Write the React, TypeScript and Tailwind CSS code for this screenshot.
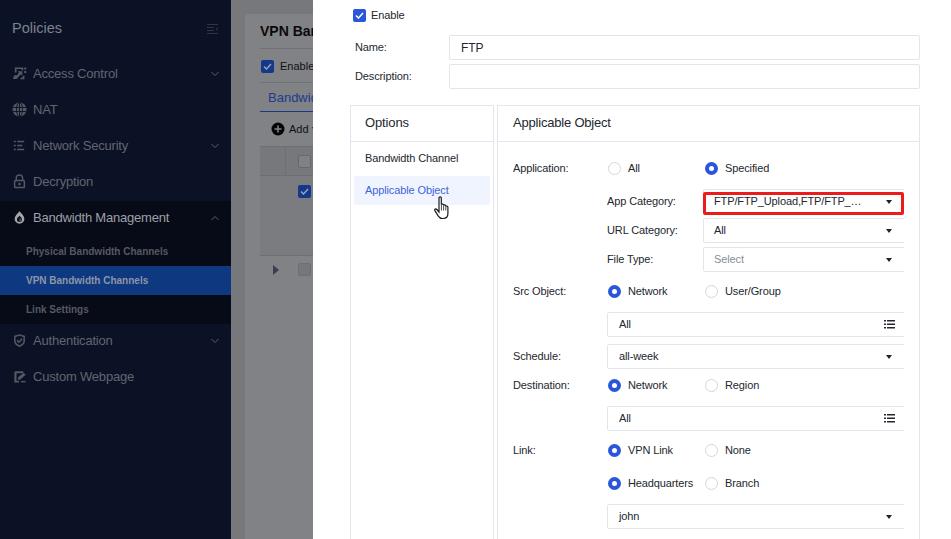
import React from "react";

const Chevron = ({ up = false }: { up?: boolean }) => (
  <svg width="10" height="6" viewBox="0 0 10 6" className="ml-auto mr-[11px] shrink-0" fill="none" stroke="#5c606b" strokeWidth="1">
    <path d={up ? "M1.5 5 L5 1.5 L8.5 5" : "M1.5 1 L5 4.5 L8.5 1"} />
  </svg>
);

const ic = "#565962";
const IconAccess = () => (
  <svg width="15" height="15" viewBox="0 0 16 16" fill={ic}>
    <path d="M3 1.500h9v3h-1.800V3.200H4.800V7H3zM13 1.500h2.200v2.200H13zM13 5.200h2.200v2.200H13zM6 5.500h5v5l-1.700-1.700-4.300 5H1l1.200-4h3.200l2-2.500zM11.500 10.500h1.800v3.500H8.500l1.500-1.700h1.500z" />
  </svg>
);
const IconGlobe = () => (
  <svg width="15" height="15" viewBox="0 0 16 16">
    <circle cx="8" cy="8" r="7.500" fill={ic} />
    <path d="M8 .5v15M.5 5.800h15M.5 10.200h15" stroke="#0b1226" strokeWidth="1" fill="none" />
    <ellipse cx="8" cy="8" rx="3.200" ry="7.500" stroke="#0b1226" strokeWidth="1" fill="none" />
  </svg>
);
const IconList = () => (
  <svg width="15" height="15" viewBox="0 0 16 16" fill={ic}>
    <path d="M2 3h2v1.500H2zM5.500 3H13v1.500H5.500zM2 7.200h2v1.500H2zM5.500 7.200H11v1.500H5.500zM2 11.500h2V13H2zM5.500 11.500H13V13H5.500z" />
  </svg>
);
const IconLock = () => (
  <svg width="15" height="15" viewBox="0 0 16 16" fill="none">
    <path d="M4.500 7V4.500a3.400 3.400 0 0 1 6.800 0V7" stroke={ic} strokeWidth="1.500" />
    <rect x="2.800" y="7" width="10.400" height="7.500" rx="1" stroke={ic} strokeWidth="1.600" />
    <circle cx="8" cy="10.700" r="1.300" fill={ic} />
  </svg>
);
const IconDrop = () => (
  <svg width="15" height="15" viewBox="0 0 16 16" fill="none">
    <path d="M8 1.200c2.600 3 5.200 5.200 5.200 8.300a5.200 5.200 0 0 1-10.400 0C2.800 6.400 5.400 4.200 8 1.200z" fill="#a4a6ac" />
    <path d="M8 6c1.300 1.500 2.700 2.400 2.700 4a2.700 2.700 0 0 1-5.400 0C5.300 8.400 6.700 7.500 8 6z" fill="#070a17" />
    <path d="M8 8.500v4a2.500 2.500 0 0 0 2.200-2.500c0-.7-1.200-1-2.200-1.500z" fill="#a4a6ac" opacity="0.5" />
  </svg>
);
const IconShield = () => (
  <svg width="15" height="15" viewBox="0 0 16 16" fill="none">
    <path d="M8 1.200l5.800 1.800v5.200c0 3.400-2.600 5.500-5.800 6.600-3.200-1.100-5.800-3.200-5.800-6.600V3z" fill={ic} />
    <path d="M8 3l4.200 1.300v3.900c0 2.400-1.900 3.900-4.200 4.800-2.300-.9-4.200-2.400-4.200-4.800V4.300z" fill="#0b1226" />
    <path d="M5.300 7.700L7.400 9.800l3.400-3.600" stroke={ic} strokeWidth="1.600" />
  </svg>
);
const IconEdit = () => (
  <svg width="15" height="15" viewBox="0 0 16 16" fill="none">
    <path d="M3.500 2.500h8.500v2H4.800V12.500h2.700v2H2.500V3.500z" fill={ic} />
    <path d="M6.500 8.800l6-4.800 2 2-6 5.500h-2z" fill={ic} />
    <path d="M9.500 13.500h5" stroke={ic} strokeWidth="1.500" />
  </svg>
);

const NavItem = ({ icon, label, chevron, up, bright }: { icon: React.ReactNode; label: string; chevron?: boolean; up?: boolean; bright?: boolean }) => (
  <div className="flex h-[36px] items-center pb-[3px] pl-[12px]">
    <span className="flex w-[21px] shrink-0">{icon}</span>
    <span className={bright ? "text-[13px] tracking-[-0.2px] text-[#9ea1a8]" : "text-[13px] tracking-[-0.2px] text-[#62656e]"}>{label}</span>
    {chevron && <Chevron up={up} />}
  </div>
);

const SubItem = ({ label, active }: { label: string; active?: boolean }) => (
  <div className={active ? "flex h-[29px] items-center bg-[#0e3880] pl-[26px] text-[10px] font-bold text-[#8d95a6]" : "flex h-[29px] items-center pl-[26px] text-[10px] font-bold text-[#565963]"}>
    {label}
  </div>
);

const Sidebar = () => (
  <aside className="flex h-full w-[231px] shrink-0 flex-col bg-[#0b1226]">
    <div className="flex h-[57px] shrink-0 items-center justify-between pl-[12px] pr-[12px]">
      <span className="text-[14.5px] text-[#7d828c]">Policies</span>
      <svg width="12" height="10" viewBox="0 0 12 10" fill="none" stroke="#31353f" strokeWidth="1">
        <path d="M0 .5h11M0 3.500h7M0 6.500h7M0 9.500h11M11 3.500L9 5l2 1.500" />
      </svg>
    </div>
    <NavItem icon={<IconAccess />} label="Access Control" chevron />
    <NavItem icon={<IconGlobe />} label="NAT" />
    <NavItem icon={<IconList />} label="Network Security" chevron />
    <NavItem icon={<IconLock />} label="Decryption" />
    <div className="flex flex-col bg-[#070a17]">
      <NavItem icon={<IconDrop />} label="Bandwidth Management" chevron up bright />
      <SubItem label="Physical Bandwidth Channels" />
      <SubItem label="VPN Bandwidth Channels" active />
      <SubItem label="Link Settings" />
    </div>
    <NavItem icon={<IconShield />} label="Authentication" chevron />
    <NavItem icon={<IconEdit />} label="Custom Webpage" />
  </aside>
);

const GrayCheck = ({ checked }: { checked?: boolean }) =>
  checked ? (
    <span className="flex h-[13px] w-[13px] items-center justify-center rounded-[2px] bg-[#14398a]">
      <svg width="9" height="7" viewBox="0 0 9 7" fill="none" stroke="#9aa0ad" strokeWidth="1.500"><path d="M1 3.500L3.500 6 8 1" /></svg>
    </span>
  ) : (
    <span className="block h-[13px] w-[13px] rounded-[2px] border border-[#66686c] bg-[#7f8185]" />
  );

const Backdrop = () => (
  <div className="h-full w-[82px] shrink-0 overflow-hidden bg-[#76787c] pl-[14px] pt-[14px]">
    <div className="h-full w-[300px] rounded-t-[3px] bg-[#808286] pl-[15px] pr-[15px]">
      <div className="flex h-[35px] items-center overflow-hidden whitespace-nowrap border-b border-[#707276] pt-[1px] text-[14px] font-bold text-[#0a0a0b]">VPN Bandwidth</div>
      <div className="flex h-[34px] items-center border-b border-[#707276] pl-[1px] pt-[1px] text-[11px] text-[#101012]">
        <GrayCheck checked />
        <span className="ml-[6px]">Enable</span>
      </div>
      <div className="flex h-[29px] items-center border-b border-[#14398a] pl-[8px] pt-[1px] text-[13px] text-[#1f3a8c]">Bandwidth</div>
      <div className="flex h-[34px] items-center pl-[11px] text-[11px] text-[#101012]">
        <svg width="14" height="14" viewBox="0 0 14 14"><circle cx="7" cy="7" r="6.500" fill="#050506" /><path d="M7 3.500v7M3.500 7h7" stroke="#808286" strokeWidth="1.600" /></svg>
        <span className="ml-[4px]">Add</span>
        <span className="ml-[3px] text-[8px]">▾</span>
      </div>
      <div className="flex h-[30px] items-center border-y border-[#6d6f73] bg-[#76787c]">
        <div className="h-full w-[26px] border-r border-[#6d6f73]" />
        <span className="ml-[12px]"><GrayCheck /></span>
      </div>
      <div className="flex h-[80px] items-start border-b border-[#6d6f73] bg-[#7a7c80] pl-[38px] pt-[9px]">
        <GrayCheck checked />
      </div>
      <div className="flex items-center pl-[13px] pt-[7px]">
        <span className="h-0 w-0 border-y-[5px] border-l-[6px] border-y-transparent border-l-[#3a3f4d]" />
        <span className="ml-[19px] block h-[13px] w-[13px] rounded-[2px] border border-[#6d6f73] bg-[#75777b]" />
      </div>
    </div>
  </div>
);

const Check = () => (
  <span className="flex h-[13px] w-[13px] items-center justify-center rounded-[2px] bg-[#2a56d9]">
    <svg width="9" height="7" viewBox="0 0 9 7" fill="none" stroke="#fff" strokeWidth="1.500"><path d="M1 3.500L3.500 6 8 1" /></svg>
  </span>
);

const Radio = ({ on, label, wide }: { on?: boolean; label: string; wide?: boolean }) => (
  <label className={wide ? "flex w-[97px] items-center" : "flex items-center"}>
    {on ? (
      <span className="block h-[13px] w-[13px] shrink-0 rounded-full border-[4px] border-[#2a56d9] bg-white" />
    ) : (
      <span className="block h-[13px] w-[13px] shrink-0 rounded-full border border-[#d4d6da] bg-white" />
    )}
    <span className="ml-[7px] whitespace-nowrap">{label}</span>
  </label>
);

const Caret = () => <span className="h-0 w-0 shrink-0 border-x-[3.5px] border-t-[4px] border-x-transparent border-t-[#1f2329]" />;

const ListIcon = () => (
  <svg width="11" height="9" viewBox="0 0 11 9" className="shrink-0" fill="#23272e">
    <path d="M0 0h2v1.500H0zM3 0h8v1.500H3zM0 3.500h2V5H0zM3 3.500h8V5H3zM0 7h2v1.500H0zM3 7h8v1.500H3z" />
  </svg>
);

const WideField = ({ value, list }: { value: string; list?: boolean }) => (
  <div className="flex">
    <span className="w-[94px] shrink-0" />
    <div className="mt-[11px] flex h-[25px] w-[330px] shrink-0 items-center rounded-[2px] border border-[#e3e5e9] pl-[11px]">
      <span className={list ? "w-[265px] shrink-0" : "w-[267px] shrink-0"}>{value}</span>
      {list ? <ListIcon /> : <Caret />}
    </div>
  </div>
);

const CatRow = ({ label, value, muted }: { label: string; value: string; muted?: boolean }) => (
  <div className="mt-[4px] flex h-[25px] items-center">
    <span className="w-[94px] shrink-0" />
    <span className="w-[96px] shrink-0">{label}</span>
    <div className="flex h-[25px] w-[330px] shrink-0 items-center rounded-[2px] border border-[#e3e5e9] pl-[10px]">
      <span className={muted ? "w-[172px] shrink-0 text-[#8a8e96]" : "w-[172px] shrink-0"}>{value}</span>
      <Caret />
    </div>
  </div>
);

const Hand = () => (
  <svg width="18" height="25" viewBox="0 0 18 25" className="absolute left-[83px] top-[54px]">
    <path
      d="M5 1.800c0-1.200 2.300-1.200 2.300 0v7c.1-1 2.100-1 2.200.1v.7c.2-1 2.100-.9 2.200.2v.8c.2-.9 2.100-.7 2.200.4v6.500c0 3-1.800 5-4.800 5H8.300c-2 0-3.100-1-4-2.400L.9 14.600c-.7-1.300 1-2.300 2-1.100L5 16z"
      fill="#fff"
      stroke="#1b1b1b"
      strokeWidth="1.200"
    />
    <path d="M7.400 9v5.500M9.600 9.800v4.700M11.800 10.700v3.800" stroke="#1b1b1b" strokeWidth="0.800" fill="none" />
  </svg>
);

const Drawer = () => (
  <section className="h-full min-w-0 flex-1 overflow-hidden bg-white pl-[37px] pr-[31px] text-[11px] tracking-[-0.12px] text-[#23272e]">
    <div className="flex h-[31px] items-center pl-[4px]">
      <span className="ml-[-1px]"><Check /></span>
      <span className="ml-[5px]">Enable</span>
    </div>
    <div className="mt-[4px] flex h-[25px] items-center">
      <span className="w-[99px] pl-[5px]">Name:</span>
      <div className="flex h-full flex-1 items-center rounded-[2px] border border-[#e3e5e9] pl-[11px] text-[12px]">FTP</div>
    </div>
    <div className="mt-[4px] flex h-[25px] items-center">
      <span className="w-[99px] pl-[5px]">Description:</span>
      <div className="h-full flex-1 rounded-[2px] border border-[#e3e5e9]" />
    </div>
    <div className="mt-[16px] flex gap-[3px]">
      <div className="h-[460px] w-[144px] shrink-0 border border-[#e3e5f0]">
        <div className="flex h-[36px] items-center border-b border-[#e3e5f0] pb-[2px] pl-[14px] text-[13px]">Options</div>
        <div className="relative px-[3px] pt-[2px]">
          <div className="flex h-[29px] items-center pl-[11px]">Bandwidth Channel</div>
          <div className="mt-[3px] flex h-[29px] items-center rounded-[2px] bg-[#f0f4fe] pl-[11px] text-[#3d63dd]">Applicable Object</div>
          <Hand />
        </div>
      </div>
      <div className="h-[460px] min-w-0 flex-1 border border-[#e3e5f0]">
        <div className="flex h-[36px] items-center border-b border-[#e3e5f0] pb-[2px] pl-[15px] text-[13px] tracking-[-0.2px]">Applicable Object</div>
        <div className="ml-[15px] mr-[15px] overflow-hidden pt-[16px]">
          <div className="flex h-5 items-center">
            <span className="w-[95px] shrink-0">Application:</span>
            <Radio label="All" wide />
            <Radio on label="Specified" />
          </div>
          <div className="relative mt-[11px] flex h-[25px] items-center">
            <span className="w-[94px] shrink-0" />
            <span className="w-[96px] shrink-0">App Category:</span>
            <div className="flex h-[25px] w-[330px] shrink-0 items-center rounded-[2px] border border-[#e3e5e9] pl-[10px]">
              <span className="w-[172px] shrink-0 pr-[24px]">
                <span className="block overflow-hidden text-ellipsis whitespace-nowrap">FTP/FTP_Upload,FTP/FTP_Download</span>
              </span>
              <Caret />
            </div>
            <span className="absolute left-[190px] top-[3px] h-[23px] w-[201px] rounded-[2px] border-[3px] border-[#ec1c1c]" />
          </div>
          <CatRow label="URL Category:" value="All" />
          <CatRow label="File Type:" value="Select" muted />
          <div className="mt-[9px] flex h-5 items-center">
            <span className="w-[95px] shrink-0">Src Object:</span>
            <Radio on label="Network" wide />
            <Radio label="User/Group" />
          </div>
          <WideField value="All" list />
          <div className="mt-[7px] flex h-[25px] items-center">
            <span className="w-[94px] shrink-0">Schedule:</span>
            <div className="flex h-[25px] w-[330px] shrink-0 items-center rounded-[2px] border border-[#e3e5e9] pl-[11px]">
              <span className="w-[267px] shrink-0">all-week</span>
              <Caret />
            </div>
          </div>
          <div className="mt-[6px] flex h-5 items-center">
            <span className="w-[95px] shrink-0">Destination:</span>
            <Radio on label="Network" wide />
            <Radio label="Region" />
          </div>
          <WideField value="All" list />
          <div className="mt-[9px] flex h-5 items-center">
            <span className="w-[95px] shrink-0">Link:</span>
            <Radio on label="VPN Link" wide />
            <Radio label="None" />
          </div>
          <div className="mt-[13px] flex h-5 items-center">
            <span className="w-[95px] shrink-0" />
            <Radio on label="Headquarters" wide />
            <Radio label="Branch" />
          </div>
          <WideField value="john" />
        </div>
      </div>
    </div>
  </section>
);

export default function App() {
  return (
    <div className="flex h-[539px] w-[951px] overflow-hidden font-['Liberation_Sans',Arial,sans-serif]">
      <Sidebar />
      <Backdrop />
      <Drawer />
    </div>
  );
}
